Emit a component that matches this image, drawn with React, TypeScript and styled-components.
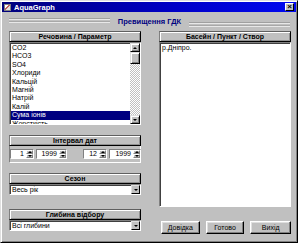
import { createGlobalStyle, styled } from 'styled-components';

const GlobalStyle = createGlobalStyle`
  html, body {
    margin: 0;
    padding: 0;
    background: #c0c0c0;
  }
  * {
    box-sizing: border-box;
  }
`;

const parameters = ['CO2', 'HCO3', 'SO4', 'Хлориди', 'Кальцій', 'Магній', 'Натрій', 'Калій', 'Сума іонів', 'Жорсткість'];
const selectedParameter = 'Сума іонів';

type SpinProps = { value: string; width: number };

function SpinEdit({ value, width }: SpinProps) {
  return (
    <SpinBox style={{ width }}>
      <SpinValue>{value}</SpinValue>
      <SpinButtons>
        <SpinHalf>
          <ArrowUp />
        </SpinHalf>
        <SpinHalf>
          <ArrowDown />
        </SpinHalf>
      </SpinButtons>
    </SpinBox>
  );
}

function Combo({ value }: { value: string }) {
  return (
    <ComboBox>
      <ComboValue>{value}</ComboValue>
      <DropButton>
        <ArrowDown />
      </DropButton>
    </ComboBox>
  );
}

export default function App() {
  return (
    <>
      <GlobalStyle />
      <Window>
        <TitleBar>
          <AppIcon />
          <TitleText>AquaGraph</TitleText>
          <CloseButton>×</CloseButton>
        </TitleBar>
        <Body>
          <HeadingRow>
            <Etch $top={3} />
            <Heading>Превищення ГДК</Heading>
            <Etch $top={7} />
          </HeadingRow>
          <Columns>
            <Column>
              <Header>Речовина / Параметр</Header>
              <ListBox $height={83}>
                <Items>
                  {parameters.map((p) => (
                    <Item key={p} $selected={p === selectedParameter}>
                      {p}
                    </Item>
                  ))}
                </Items>
                <ScrollBar>
                  <ScrollButton>
                    <ArrowUp />
                  </ScrollButton>
                  <Thumb />
                  <Track />
                  <ScrollButton>
                    <ArrowDown />
                  </ScrollButton>
                </ScrollBar>
              </ListBox>

              <Group $top={10}>
                <Header>Інтервал дат</Header>
                <DateRow>
                  <SpinPair>
                    <SpinEdit value="1" width={24} />
                    <SpinEdit value="1999" width={31} />
                  </SpinPair>
                  <SpinPair>
                    <SpinEdit value="12" width={24} />
                    <SpinEdit value="1999" width={32} />
                  </SpinPair>
                </DateRow>
              </Group>

              <Group $top={10}>
                <Header>Сезон</Header>
                <Combo value="Весь рік" />
              </Group>

              <Group $top={14}>
                <Header>Глибина відбору</Header>
                <Combo value="Всі глибини" />
              </Group>
            </Column>

            <Column>
              <Header>Басейн / Пункт / Створ</Header>
              <ListBox $height={165}>
                <Items>
                  <Item $selected={false}>р.Дніпро.</Item>
                </Items>
              </ListBox>
              <ButtonRow>
                <Button>Довідка</Button>
                <Button>Готово</Button>
                <Button $wide>Вихід</Button>
              </ButtonRow>
            </Column>
          </Columns>
        </Body>
      </Window>
    </>
  );
}

const Window = styled.div`
  width: 298px;
  height: 243px;
  background: #c0c0c0;
  border: 1px solid;
  border-color: #dfdfdf #000 #000 #dfdfdf;
  box-shadow: inset 1px 1px #fff, inset -1px -1px #808080;
  font-family: 'Liberation Sans', Arial, sans-serif;
  font-size: 7px;
  color: #000;
  overflow: hidden;
`;

const TitleBar = styled.div`
  margin: 1px 1px 0;
  height: 10px;
  display: flex;
  align-items: center;
  padding: 0 2px;
  background: linear-gradient(90deg, #00007b 0%, #0000c8 60%, #0008f0 100%);
`;

const AppIcon = styled.div`
  width: 7px;
  height: 7px;
  background: linear-gradient(135deg, #fff 0 40%, #c06060 40% 60%, #e0e0e0 60%);
  border: 1px solid #808080;
`;

const TitleText = styled.span`
  margin-left: 3px;
  color: #fff;
  font-weight: bold;
  font-size: 7.5px;
  flex: 1;
`;

const CloseButton = styled.div`
  width: 9px;
  height: 8px;
  background: #c0c0c0;
  border: 1px solid;
  border-color: #fff #000 #000 #fff;
  font-size: 8px;
  line-height: 5px;
  text-align: center;
  font-weight: bold;
`;

const Body = styled.div`
  padding: 0 7px 0 8px;
`;

const HeadingRow = styled.div`
  height: 19px;
  display: flex;
  align-items: flex-start;
  gap: 8px;
  padding-top: 3px;
`;

const Etch = styled.div<{ $top: number }>`
  flex: 1;
  margin-top: ${({ $top }) => $top}px;
  height: 4px;
  border-top: 1px solid #a0a0a0;
  border-bottom: 1px solid #a8a8a8;
  box-shadow: 0 1px #e8e8e8, inset 0 1px #e8e8e8;
`;

const Heading = styled.div`
  color: #000080;
  font-weight: bold;
  font-size: 7.5px;
  line-height: 9px;
  padding-top: 2px;
`;

const Columns = styled.div`
  display: grid;
  grid-template-columns: 132px 132px;
  column-gap: 18px;
`;

const Column = styled.div`
  display: flex;
  flex-direction: column;
`;

const Group = styled.div<{ $top: number }>`
  margin-top: ${({ $top }) => $top}px;
  display: flex;
  flex-direction: column;
`;

const Header = styled.div`
  height: 11px;
  line-height: 9px;
  text-align: center;
  font-weight: bold;
  font-size: 7px;
  background: #c0c0c0;
  border: 1px solid;
  border-color: #606060 #000 #000 #808080;
  box-shadow: inset 1px 1px #fff, inset -1px -1px #909090;
`;

const ListBox = styled.div<{ $height: number }>`
  height: ${({ $height }) => $height}px;
  display: flex;
  background: #fff;
  border: 1px solid;
  border-color: #808080 #fff #fff #808080;
  box-shadow: inset 1px 1px #404040;
  overflow: hidden;
`;

const Items = styled.div`
  flex: 1;
  padding: 1px 0 0 1px;
  overflow: hidden;
`;

const Item = styled.div<{ $selected: boolean }>`
  height: 8.4px;
  line-height: 8.4px;
  padding-left: 1px;
  white-space: nowrap;
  color: ${({ $selected }) => ($selected ? '#fff' : '#000')};
  background: ${({ $selected }) => ($selected ? '#000080' : 'transparent')};
`;

const ScrollBar = styled.div`
  width: 10px;
  display: flex;
  flex-direction: column;
  background: repeating-conic-gradient(#fff 0 25%, #c0c0c0 0 50%) 0 0 / 2px 2px;
`;

const ScrollButton = styled.div`
  height: 9px;
  display: flex;
  align-items: center;
  justify-content: center;
  background: #c0c0c0;
  border: 1px solid;
  border-color: #dfdfdf #000 #000 #dfdfdf;
  box-shadow: inset 1px 1px #fff, inset -1px -1px #808080;
`;

const Thumb = styled.div`
  height: 12px;
  background: #c0c0c0;
  border: 1px solid;
  border-color: #dfdfdf #000 #000 #dfdfdf;
  box-shadow: inset 1px 1px #fff, inset -1px -1px #808080;
`;

const Track = styled.div`
  flex: 1;
`;

const ArrowUp = styled.div`
  width: 0;
  height: 0;
  border-left: 2px solid transparent;
  border-right: 2px solid transparent;
  border-bottom: 2px solid #000;
`;

const ArrowDown = styled.div`
  width: 0;
  height: 0;
  border-left: 2px solid transparent;
  border-right: 2px solid transparent;
  border-top: 2px solid #000;
`;

const DateRow = styled.div`
  display: flex;
  gap: 16px;
  padding: 3px 0 3px 0;
  border: 1px solid;
  border-top: none;
  border-color: #808080 #fff #fff #808080;
`;

const SpinPair = styled.div`
  display: flex;
  gap: 2px;
`;

const SpinBox = styled.div`
  height: 10px;
  display: flex;
  background: #fff;
  border: 1px solid;
  border-color: #808080 #fff #fff #808080;
`;

const SpinValue = styled.div`
  flex: 1;
  text-align: right;
  line-height: 8px;
  padding-right: 2px;
`;

const SpinButtons = styled.div`
  width: 7px;
  display: flex;
  flex-direction: column;
`;

const SpinHalf = styled.div`
  flex: 1;
  display: flex;
  align-items: center;
  justify-content: center;
  background: #c0c0c0;
  border: 1px solid;
  border-color: #fff #808080 #808080 #fff;
`;

const ComboBox = styled.div`
  height: 11px;
  display: flex;
  background: #fff;
  border: 1px solid;
  border-color: #808080 #fff #fff #808080;
  box-shadow: inset 1px 1px #404040;
`;

const ComboValue = styled.div`
  flex: 1;
  line-height: 9px;
  padding-left: 2px;
`;

const DropButton = styled.div`
  width: 9px;
  display: flex;
  align-items: center;
  justify-content: center;
  background: #c0c0c0;
  border: 1px solid;
  border-color: #dfdfdf #000 #000 #dfdfdf;
`;

const ButtonRow = styled.div`
  display: flex;
  gap: 6px;
  margin-top: 14px;
  padding-left: 2px;
`;

const Button = styled.div<{ $wide?: boolean }>`
  width: ${({ $wide }) => ($wide ? 41 : 39)}px;
  height: 13px;
  line-height: 9px;
  text-align: center;
  background: #c0c0c0;
  border: 1px solid;
  border-color: #fff #000 #000 #fff;
  box-shadow: inset -1px -1px #808080, inset 1px 1px #dfdfdf;
  padding-top: 1px;
`;
